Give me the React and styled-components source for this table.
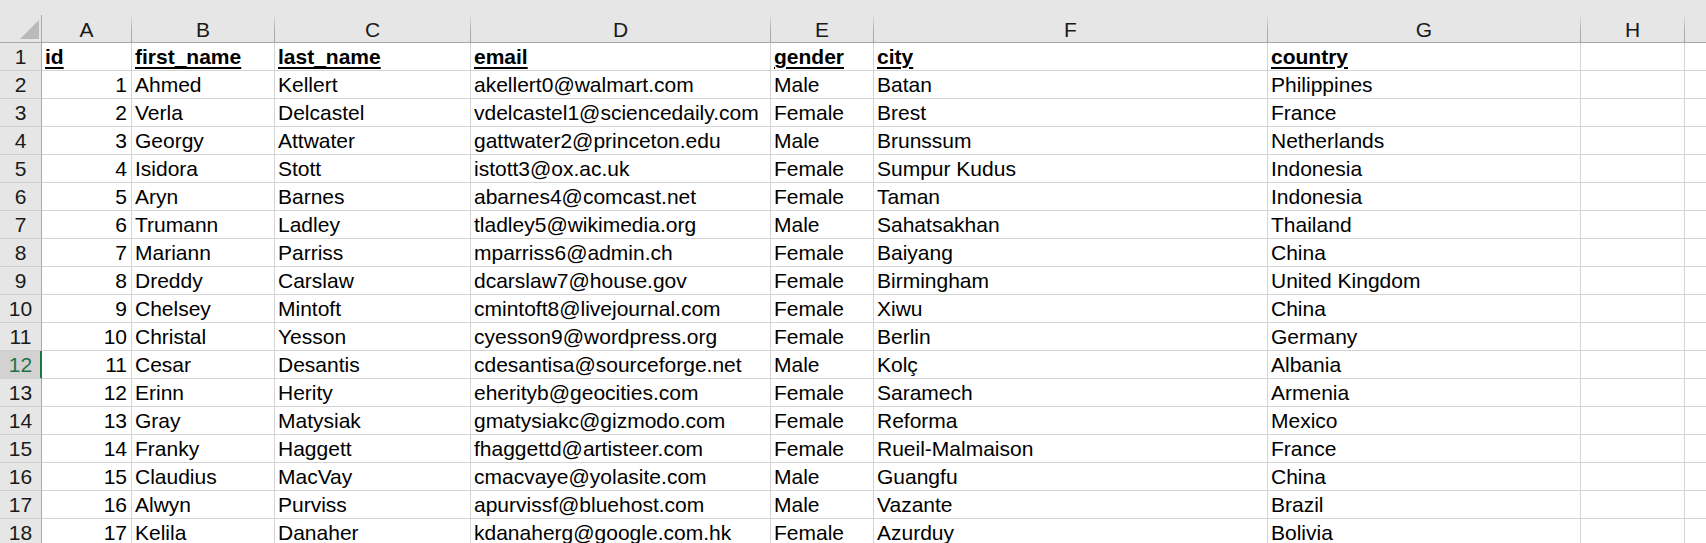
import React from 'react'
import styled, { createGlobalStyle } from 'styled-components'

const GRID = '#d4d4d4'
const HEAD_BG = '#e6e6e6'
const HEAD_LINE = '#a8a8a8'
const GREEN = '#217346'

// last column only peeks in at the right edge, its letter lies off screen
const COLUMNS = ['A', 'B', 'C', 'D', 'E', 'F', 'G', 'H', '']
const WIDTHS = [90, 143, 196, 300, 103, 394, 313, 104, 104]

const HEADERS = ['id', 'first_name', 'last_name', 'email', 'gender', 'city', 'country']

const ROWS = [
  [1, 'Ahmed', 'Kellert', 'akellert0@walmart.com', 'Male', 'Batan', 'Philippines'],
  [2, 'Verla', 'Delcastel', 'vdelcastel1@sciencedaily.com', 'Female', 'Brest', 'France'],
  [3, 'Georgy', 'Attwater', 'gattwater2@princeton.edu', 'Male', 'Brunssum', 'Netherlands'],
  [4, 'Isidora', 'Stott', 'istott3@ox.ac.uk', 'Female', 'Sumpur Kudus', 'Indonesia'],
  [5, 'Aryn', 'Barnes', 'abarnes4@comcast.net', 'Female', 'Taman', 'Indonesia'],
  [6, 'Trumann', 'Ladley', 'tladley5@wikimedia.org', 'Male', 'Sahatsakhan', 'Thailand'],
  [7, 'Mariann', 'Parriss', 'mparriss6@admin.ch', 'Female', 'Baiyang', 'China'],
  [8, 'Dreddy', 'Carslaw', 'dcarslaw7@house.gov', 'Female', 'Birmingham', 'United Kingdom'],
  [9, 'Chelsey', 'Mintoft', 'cmintoft8@livejournal.com', 'Female', 'Xiwu', 'China'],
  [10, 'Christal', 'Yesson', 'cyesson9@wordpress.org', 'Female', 'Berlin', 'Germany'],
  [11, 'Cesar', 'Desantis', 'cdesantisa@sourceforge.net', 'Male', 'Kolç', 'Albania'],
  [12, 'Erinn', 'Herity', 'eherityb@geocities.com', 'Female', 'Saramech', 'Armenia'],
  [13, 'Gray', 'Matysiak', 'gmatysiakc@gizmodo.com', 'Female', 'Reforma', 'Mexico'],
  [14, 'Franky', 'Haggett', 'fhaggettd@artisteer.com', 'Female', 'Rueil-Malmaison', 'France'],
  [15, 'Claudius', 'MacVay', 'cmacvaye@yolasite.com', 'Male', 'Guangfu', 'China'],
  [16, 'Alwyn', 'Purviss', 'apurvissf@bluehost.com', 'Male', 'Vazante', 'Brazil'],
  [17, 'Kelila', 'Danaher', 'kdanaherg@google.com.hk', 'Female', 'Azurduy', 'Bolivia'],
]

const SELECTED_ROW = 12

const GlobalStyle = createGlobalStyle`
  html, body {
    margin: 0;
    padding: 0;
    background: #fff;
    overflow: hidden;
  }
  body {
    font-family: "Liberation Sans", Arial, sans-serif;
    font-size: 21px;
    color: #000;
  }
`

const Window = styled.div`
  width: 1706px;
  height: 543px;
  overflow: hidden;
`

const Strip = styled.div`
  height: 15px;
  background: ${HEAD_BG};
`

const Sheet = styled.div`
  display: grid;
  width: max-content;
  grid-template-columns: 42px ${WIDTHS.map(w => w + 'px').join(' ')};
  grid-auto-rows: 28px;
`

const Corner = styled.div`
  box-sizing: border-box;
  background: ${HEAD_BG};
  border-right: 1px solid ${HEAD_LINE};
  border-bottom: 1px solid ${HEAD_LINE};
  display: flex;
  justify-content: flex-end;
  align-items: flex-end;
  padding: 0 2px 3px 0;

  &::after {
    content: '';
    width: 19px;
    height: 19px;
    background: #bababa;
    clip-path: polygon(100% 0, 100% 100%, 0 100%);
  }
`

const ColHeader = styled.div`
  box-sizing: border-box;
  background: ${HEAD_BG};
  border-right: 1px solid;
  border-image: linear-gradient(${HEAD_BG}, #b4b4b4 45%, #9f9f9f) 1;
  box-shadow: inset 0 -1px 0 ${HEAD_LINE};
  text-align: center;
  line-height: 27px;
  padding-top: 1px;
  color: #1a1a1a;
`

const RowHeader = styled.div`
  box-sizing: border-box;
  background: ${p => (p.$selected ? '#d2d2d2' : HEAD_BG)};
  color: ${p => (p.$selected ? GREEN : '#1a1a1a')};
  border-right: 1px solid ${p => (p.$selected ? GREEN : HEAD_LINE)};
  box-shadow: ${p => (p.$selected ? `inset -1px 0 0 ${GREEN}` : 'none')};
  border-bottom: 1px solid #cfcfcf;
  text-align: center;
  line-height: 27px;
`

const Cell = styled.div`
  box-sizing: border-box;
  border-right: 1px solid ${GRID};
  border-bottom: 1px solid ${GRID};
  line-height: 27px;
  white-space: nowrap;
  overflow: hidden;
  text-align: ${p => (p.$number ? 'right' : 'left')};
  padding: 0 ${p => (p.$number ? '4px' : '3px')} 0 3px;
`

const Title = styled.span`
  font-weight: bold;
  text-decoration: underline;
  text-decoration-thickness: 2px;
  text-underline-offset: 3px;
`

const pad = cells => [...cells, '', '']

const App = () => (
  <Window>
    <GlobalStyle />
    <Strip />
    <Sheet>
      <Corner />
      {COLUMNS.map((c, i) => (
        <ColHeader key={i}>{c}</ColHeader>
      ))}

      <RowHeader>1</RowHeader>
      {pad(HEADERS).map((h, i) => (
        <Cell key={'h' + i}>{h && <Title>{h}</Title>}</Cell>
      ))}

      {ROWS.map((row, r) => (
        <React.Fragment key={r}>
          <RowHeader $selected={r + 2 === SELECTED_ROW}>{r + 2}</RowHeader>
          {pad(row).map((v, i) => (
            <Cell key={i} $number={typeof v === 'number'}>{v}</Cell>
          ))}
        </React.Fragment>
      ))}
    </Sheet>
  </Window>
)

export default App
